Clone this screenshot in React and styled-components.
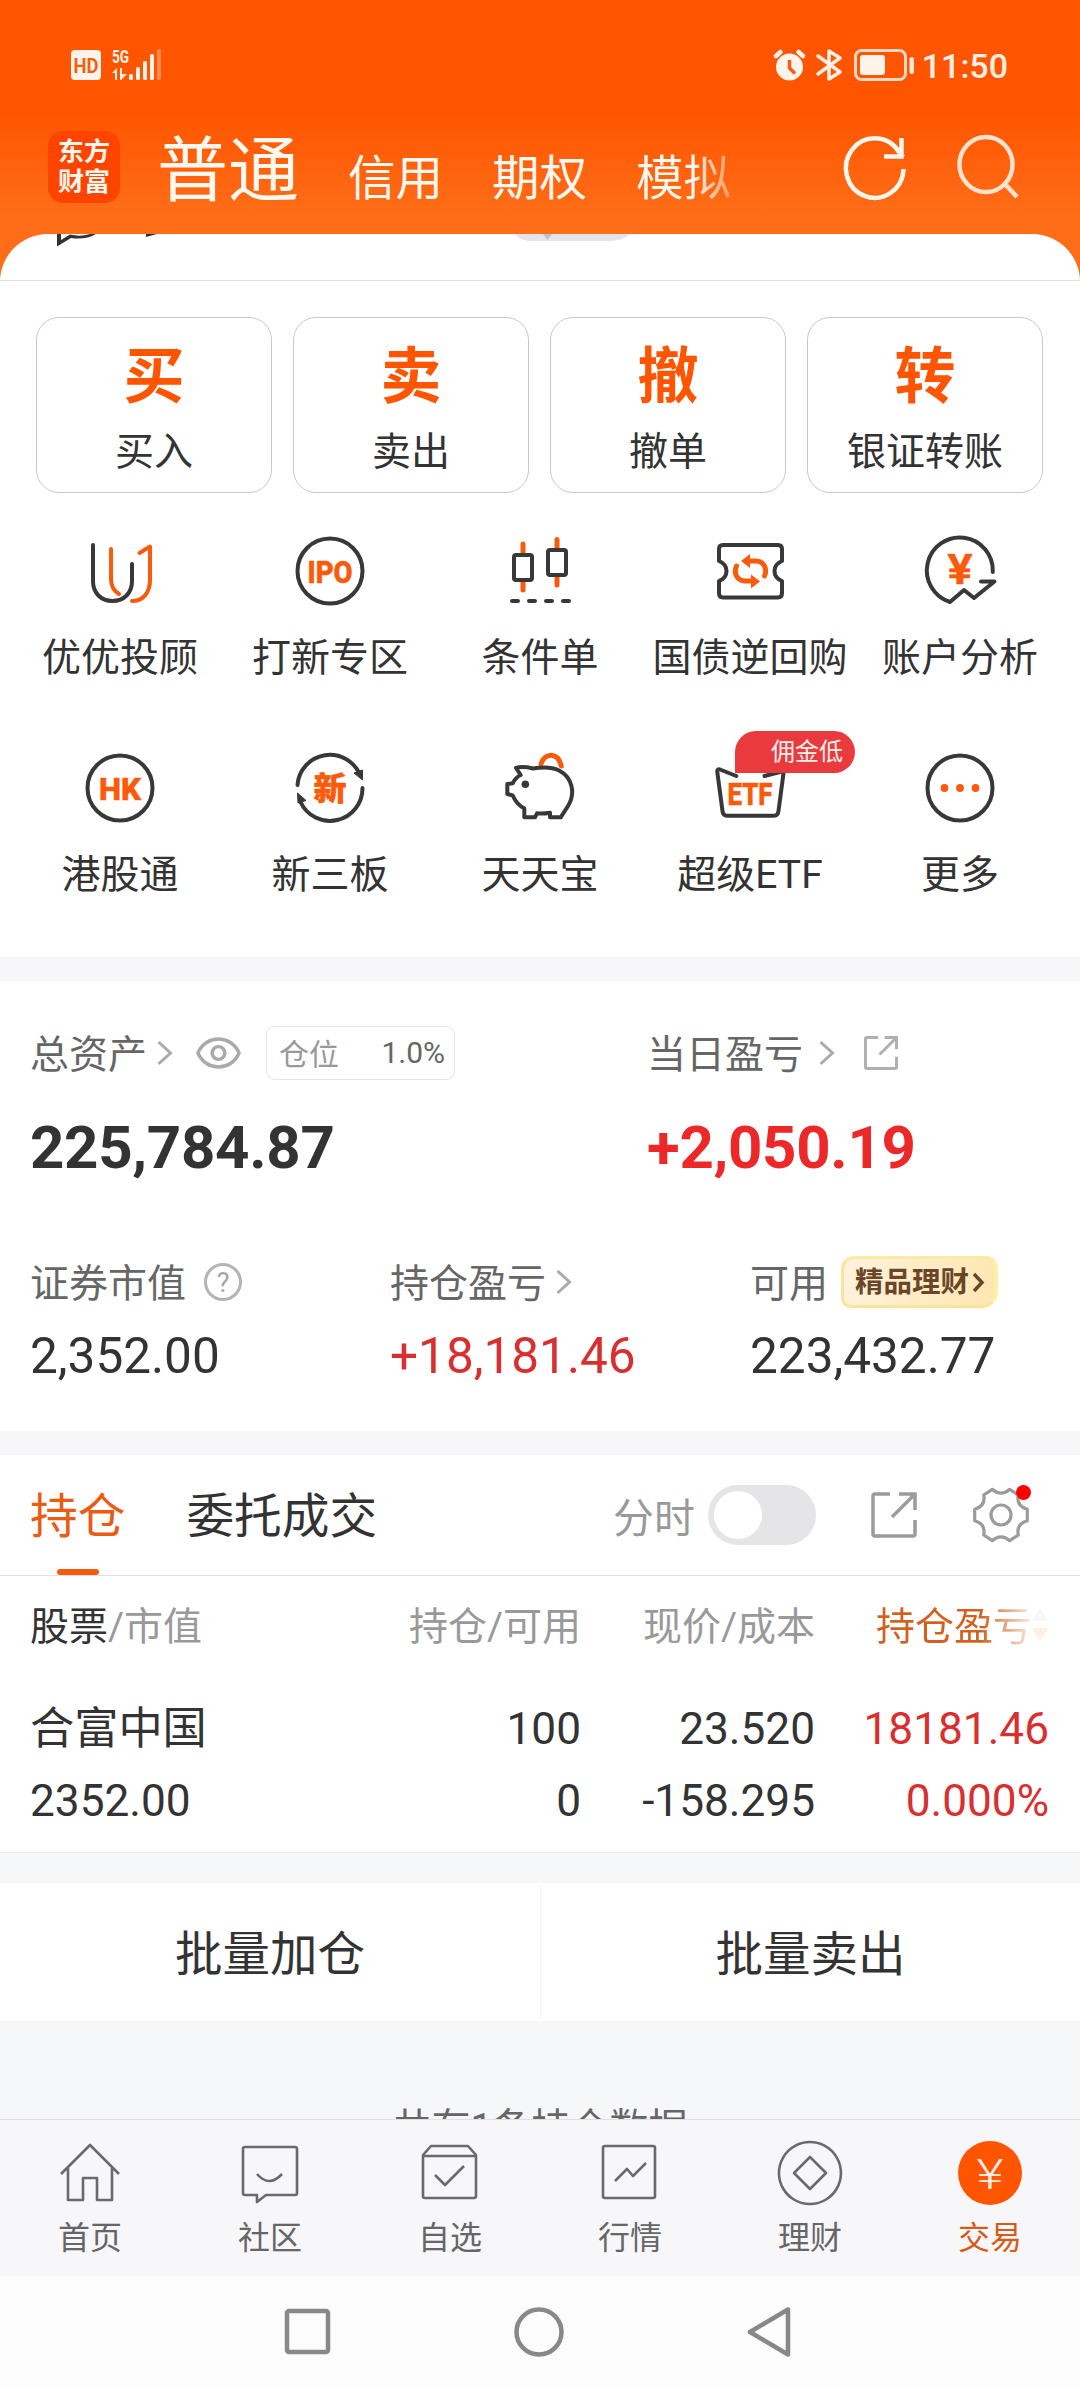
/**
*
* Trade home: header, quick actions, assets and positions
*
*/

import React from 'react';
import styled, { createGlobalStyle, ThemeProvider } from 'styled-components';

const theme = {
  color: {
    orange: '#ff5500',
    dark: '#333333',
    grey: '#666666',
    light: '#999999',
    red: '#d92f2f',
    gap: '#f7f7fa',
    line: '#e0e0e3',
  },
};

const GlobalStyle = createGlobalStyle`
  body {
    margin: 0;
    background: #fcfcfc;
    font-family: Roboto, 'Noto Sans CJK SC', sans-serif;
    color: #333333;
  }

  * {
    box-sizing: border-box;
  }

  svg {
    display: block;
    flex: none;
    overflow: visible;
  }
`;

/* ---------- icons ---------- */

const DARK = '#383838';
const ORANGE = '#fa5a0a';

const Line = (props) => (
  <g fill="none" stroke={props.color || DARK} strokeWidth={props.w || 4} strokeLinecap="round" strokeLinejoin="round">
    {props.children}
  </g>
);

const Word = (props) => (
  <text
    x={props.x || 38}
    y={props.y}
    fontSize={props.size}
    fontWeight={props.weight || 800}
    textAnchor="middle"
    textLength={props.length}
    lengthAdjust="spacingAndGlyphs"
    fill={ORANGE}
    stroke={ORANGE}
    strokeWidth="0.600"
    strokeLinejoin="round"
  >
    {props.children}
  </text>
);

const gridIcons = {
  advisor: (
    <>
      <Line>
        <path d="M11 12V48C11 60 19 68 30.500 68S50 60 50 48V31" />
      </Line>
      <Line color={ORANGE}>
        <path d="M29 16V46C29 53 32 58 37 61" />
        <path d="M57.500 20L68 13.500V47C68 60 61 68 50 68" />
      </Line>
    </>
  ),
  ipo: (
    <>
      <Line><circle cx="38" cy="38" r="32.500" /></Line>
      <Word y="49.500" size="32" length="45">IPO</Word>
    </>
  ),
  candles: (
    <>
      <Line color={ORANGE} w="5">
        <path d="M21 11V20M21 50V57M55 6.500V15M55 45V52" />
      </Line>
      <Line>
        <rect x="12" y="22" width="18" height="25" rx="2" />
        <rect x="46" y="17" width="18" height="25" rx="2" />
        <path d="M10 68H16M27 68H33M44 68H50M61 68H67" />
      </Line>
    </>
  ),
  bond: (
    <>
      <Line>
        <path d="M11 12H66Q70 12 70 16V28Q62.500 31 62.500 38T70 48V60Q70 64.500 66 64.500H11Q7 64.500 7 60V48Q14.500 45 14.500 38T7 28V16Q7 12 11 12Z" />
      </Line>
      <Line color={ORANGE} w="5">
        <path d="M24.500 33C21 41 26 48 33 48H40" />
        <path d="M52.500 43C56 35 51 28 44 28H37" />
      </Line>
      <path d="M29 28L38 21V35ZM48 48.500L39 41.500V55.500Z" fill={ORANGE} />
    </>
  ),
  analysis: (
    <>
      <Line>
        <path d="M70.800 39A33 33 0 1 0 28 69L42 57L52 65L72.500 48.500H59" />
      </Line>
      <Word y="51" size="43" length="25" weight="600">¥</Word>
    </>
  ),
  hk: (
    <>
      <Line><circle cx="38" cy="38" r="32.500" /></Line>
      <Word y="49.500" size="32" length="42">HK</Word>
    </>
  ),
  newBoard: (
    <>
      <Line>
        <path d="M5.500 35A32.500 32.500 0 0 1 68 25" />
        <path d="M70.500 38A32.500 32.500 0 0 1 8.500 52" />
      </Line>
      <path d="M70.500 30L62 23L70.500 20ZM5.500 43L14 50.500L6 53Z" fill={DARK} stroke={DARK} strokeWidth="1" />
      <Word y="49.500" size="32" length="33">新</Word>
    </>
  ),
  pig: (
    <>
      <Line color={ORANGE} w="5"><path d="M39 14C43 2 56 2 59.300 16" /></Line>
      <Line>
        <path d="M18.700 25L14 18Q20 16 31 18.500C40 17 50 17 57 20.500C70 27 74 43 66 56L58.700 67.300H48V62.700Q41 64 35 63.300L33 67.300H22.300V58.300Q15 55 10.700 45.500L5.300 44V34L10.700 33.300Q14 27 18.700 25Z" />
      </Line>
      <circle cx="23.300" cy="34.300" r="3.800" fill={DARK} />
    </>
  ),
  etf: (
    <>
      <Line>
        <path d="M24.300 26L8 19.500Q5 18.500 5.300 22L10.500 61Q11 65.700 15 65.700H62Q66 65.700 66.500 61L71.800 21L52.500 26" />
      </Line>
      <Word y="55" size="32" length="45">ETF</Word>
    </>
  ),
  more: (
    <>
      <Line><circle cx="38" cy="38" r="32.500" /></Line>
      <g fill={ORANGE}>
        <circle cx="22.500" cy="38" r="3.900" />
        <circle cx="38" cy="38" r="3.900" />
        <circle cx="53.500" cy="38" r="3.900" />
      </g>
    </>
  ),
};

const tabIcons = {
  home: <path d="M3 33L32 4L61 33M10 27V59H25V37H39V59H54V27" />,
  community: <path d="M7 6H57Q59 6 59 8V52Q59 54 57 54H28L19 61V54H7Q5 54 5 52V8Q5 6 7 6ZM19 33Q31 47 44 33" />,
  watchlist: <path d="M5 14L13 5H50L58 14V55Q58 57 56 57H7Q5 57 5 55ZM5 15H58M17 34L27 44L46 25" />,
  market: <path d="M7 5H55Q57 5 57 7V55Q57 57 55 57H7Q5 57 5 55V7Q5 5 7 5ZM17 40L29 28L35 35L48 22" />,
  wealth: <path d="M32 1A31 31 0 1 1 31.900 1ZM32 16L48 32L32 48L16 32Z" />,
};

const Chevron = (props) => (
  <svg width="15" height="24" viewBox="0 0 15 24" fill="none" stroke={props.color || '#aaaaaa'} strokeWidth={props.w || 3}>
    <path d="M1.500 1L13.500 12L1.500 23" />
  </svg>
);

const ExportIcon = (props) => (
  <svg width={props.size} height={props.size} viewBox="0 0 46 46" fill="none" stroke={props.color} strokeWidth={props.w}>
    <path d="M19 2H4Q2 2 2 4V42Q2 44 4 44H42Q44 44 44 42V28M28 2H44V18M44 2L21 25" />
  </svg>
);

/* ---------- data ---------- */

const actions = [
  { mark: '买', label: '买入' },
  { mark: '卖', label: '卖出' },
  { mark: '撤', label: '撤单' },
  { mark: '转', label: '银证转账' },
];

const services = [
  { icon: 'advisor', label: '优优投顾' },
  { icon: 'ipo', label: '打新专区' },
  { icon: 'candles', label: '条件单' },
  { icon: 'bond', label: '国债逆回购' },
  { icon: 'analysis', label: '账户分析' },
  { icon: 'hk', label: '港股通' },
  { icon: 'newBoard', label: '新三板' },
  { icon: 'pig', label: '天天宝' },
  { icon: 'etf', label: '超级ETF', badge: '佣金低' },
  { icon: 'more', label: '更多' },
];

const tabs = [
  { icon: 'home', label: '首页' },
  { icon: 'community', label: '社区' },
  { icon: 'watchlist', label: '自选' },
  { icon: 'market', label: '行情' },
  { icon: 'wealth', label: '理财' },
];

/* ---------- sections ---------- */

function StatusBar() {
  return (
    <Status>
      <svg width="90" height="32" viewBox="0 0 90 32">
        <rect x="0" y="1" width="30" height="30" rx="4" fill="#fff4ec" />
        <text x="15" y="23.500" fontSize="20" fontWeight="700" textAnchor="middle" textLength="25" lengthAdjust="spacingAndGlyphs" fill="#f0600f">HD</text>
        <text x="41" y="14" fontSize="19" fontWeight="700" textLength="17" lengthAdjust="spacingAndGlyphs" fill="#fff0e6">5G</text>
        <path d="M41 24L46 19V31H44V24ZM49 19H51V25H56L50 31H49Z" fill="#fff0e6" />
        <g fill="#fff0e6">
          <rect x="58" y="25" width="4" height="6" rx="1.500" />
          <rect x="65" y="18" width="4" height="13" rx="1.500" />
          <rect x="72" y="12" width="4" height="19" rx="1.500" />
          <rect x="79" y="5" width="4" height="26" rx="1.500" />
          <rect x="86" y="0" width="4" height="31" rx="1.500" opacity="0.35" />
        </g>
      </svg>
      <StatusRight>
        <svg width="142" height="32" viewBox="0 0 142 32">
          <circle cx="15.500" cy="18" r="13.500" fill="#fff4ec" />
          <path d="M15.500 11V19L21 24.500" fill="none" stroke="#f2600d" strokeWidth="3.500" />
          <path d="M2 7L6.500 3M29 7L24.500 3" stroke="#fff4ec" strokeWidth="4.500" strokeLinecap="round" />
          <path d="M44 7L66 23L55 30V2L66 9L44 25" fill="none" stroke="#fff0e6" strokeWidth="3.500" strokeLinejoin="round" strokeLinecap="round" />
          <rect x="81.500" y="1.500" width="50" height="29" rx="6" fill="none" stroke="#ffd9c2" strokeWidth="3" />
          <rect x="86" y="6" width="25" height="20" rx="3" fill="#fff4ec" />
          <rect x="135.500" y="8" width="4.500" height="17" rx="2" fill="#ffe6d6" />
        </svg>
        <Clock>11:50</Clock>
      </StatusRight>
    </Status>
  );
}

function Header() {
  return (
    <Head>
      <StatusBar />
      <NavRow>
        <Logo>东方<br />财富</Logo>
        <Accounts>
          <Account $active>普通</Account>
          <Account>信用</Account>
          <Account>期权</Account>
          <Account $fade>模拟</Account>
        </Accounts>
        <svg width="62" height="64" viewBox="0 0 62 64" fill="none" stroke="#fff6ee" strokeWidth="4.500">
          <path d="M59.500 34A28.800 29.800 0 1 1 55 17L59 22M57.500 3V21.500H40" />
        </svg>
        <svg width="62" height="64" viewBox="0 0 62 64" fill="none" stroke="#ffe3cf" strokeWidth="4.500">
          <ellipse cx="29" cy="29.500" rx="26.500" ry="27.500" />
          <path d="M47 48L60 62" />
        </svg>
      </NavRow>
    </Head>
  );
}

function Assets() {
  return (
    <AssetBox>
      <MainAssets>
        <div>
          <Caption>
            <Label>总资产</Label>
            <Push $left={10}><Chevron /></Push>
            <Push $left={24}>
              <svg width="45" height="32" viewBox="0 0 46 32" fill="none" stroke="#aaaaaa" strokeWidth="3.500">
                <path d="M2 16C10 -3 36 -3 44 16C36 35 10 35 2 16Z" />
                <circle cx="23" cy="16" r="6.500" />
              </svg>
            </Push>
            <Ratio><span>仓位</span><b>1.0%</b></Ratio>
          </Caption>
          <Total>225,784.87</Total>
        </div>
        <div>
          <Caption>
            <Label>当日盈亏</Label>
            <Push $left={16}><Chevron /></Push>
            <Push $left={30}><ExportIcon size="34" color="#b0b0b0" w="4" /></Push>
          </Caption>
          <Total $up>+2,050.19</Total>
        </div>
      </MainAssets>
      <SubAssets>
        <div>
          <Caption>
            <Label>证券市值</Label>
            <Push $left={18}><Help>?</Help></Push>
          </Caption>
          <Amount>2,352.00</Amount>
        </div>
        <div>
          <Caption>
            <Label>持仓盈亏</Label>
            <Push $left={10}><Chevron /></Push>
          </Caption>
          <Amount $up>+18,181.46</Amount>
        </div>
        <div>
          <Caption>
            <Label>可用</Label>
            <GoldTag>
              <Label>精品理财</Label>
              <svg width="12" height="21" viewBox="0 0 12 21" fill="none" stroke="#6b4528" strokeWidth="3.500"><path d="M2 2L10 10.500L2 19" /></svg>
            </GoldTag>
          </Caption>
          <Amount>223,432.77</Amount>
        </div>
      </SubAssets>
    </AssetBox>
  );
}

function Positions() {
  return (
    <PositionBox>
      <PositionTabs>
        <PositionTab $active>持仓</PositionTab>
        <PositionTab>委托成交</PositionTab>
        <Tools>
          <span>分时</span>
          <Toggle />
          <ExportIcon size="46" color="#9b9b9b" w="3.500" />
          <Settings>
            <svg width="60" height="60" viewBox="0 0 60 60" fill="none" stroke="#9b9b9b" strokeWidth="3.200" strokeLinejoin="round">
              <path d="M21.300 4.300Q30 12 38.700 4.300L47.300 10Q45 21 56.300 24.300V35.700Q45 39 47.300 50L38.700 55.700Q30 48 21.300 55.700L12.700 50Q15 39 3.700 35.700V24.300Q15 21 12.700 10Z" />
              <circle cx="30" cy="30" r="10" />
            </svg>
            <Dot />
          </Settings>
        </Tools>
      </PositionTabs>
      <TableHead>
        <span><em>股票</em>/市值</span>
        <span>持仓/可用</span>
        <span>现价/成本</span>
        <SortCell>
          持仓盈亏
          <svg width="16" height="34" viewBox="0 0 16 34">
            <path d="M8 0L16 13H0Z" fill="#f6f7f9" />
            <path d="M8 34L16 20H0Z" fill="#ffefe5" />
          </svg>
        </SortCell>
      </TableHead>
      <Stock>
        <Cell>合富中国</Cell>
        <Cell>100</Cell>
        <Cell>23.520</Cell>
        <Cell $up>18181.46</Cell>
        <Cell>2352.00</Cell>
        <Cell>0</Cell>
        <Cell>-158.295</Cell>
        <Cell $up>0.000%</Cell>
      </Stock>
    </PositionBox>
  );
}

function TabBar() {
  return (
    <Bar>
      {tabs.map((tab) => (
        <Tab key={tab.icon}>
          <svg width="64" height="64" viewBox="0 0 64 64" fill="none" stroke="#6a6a6a" strokeWidth="2.600" strokeLinejoin="round">
            {tabIcons[tab.icon]}
          </svg>
          <span>{tab.label}</span>
        </Tab>
      ))}
      <Tab $active>
        <svg width="64" height="64" viewBox="0 0 64 64">
          <circle cx="32" cy="32" r="32" fill="#ff5500" />
          <text x="32" y="48" fontSize="42" fontWeight="300" textAnchor="middle" textLength="27" lengthAdjust="spacingAndGlyphs" fill="#fff0e6">¥</text>
        </svg>
        <span>交易</span>
      </Tab>
    </Bar>
  );
}

function App() {
  return (
    <ThemeProvider theme={theme}>
      <GlobalStyle />
      <Screen>
        <Header />
        <CardTop>
          <svg width="1080" height="13" viewBox="0 0 1080 13">
            <path d="M57 0V12.500L71 4Q86 6 96 0H90Q80 3 70 0.500L61 6V0Z" fill="#333333" />
            <path d="M146 0H157L146 3Z" fill="#333333" />
            <path d="M515 0Q521 7 530 7H610Q622 7 630 0Z" fill="#e3e4ec" />
            <path d="M543 0H552L547.500 6Z" fill="#bfc1cf" />
          </svg>
        </CardTop>
        <Actions>
          {actions.map((item) => (
            <Action key={item.mark}>
              <strong>{item.mark}</strong>
              <span>{item.label}</span>
            </Action>
          ))}
        </Actions>
        <Services>
          {services.map((item) => (
            <Service key={item.icon}>
              <svg width="76" height="76" viewBox="0 0 76 76">{gridIcons[item.icon]}</svg>
              <span>{item.label}</span>
              {item.badge && <Badge>{item.badge}</Badge>}
            </Service>
          ))}
        </Services>
        <Gap />
        <Assets />
        <Gap />
        <Positions />
        <Batch>
          <button type="button">批量加仓</button>
          <button type="button">批量卖出</button>
        </Batch>
        <Summary>共有1条持仓数据</Summary>
        <TabBar />
        <SystemNav>
          <svg width="46" height="46" viewBox="0 0 46 46"><rect x="2" y="2" width="41" height="41" rx="2" /></svg>
          <svg width="50" height="50" viewBox="0 0 50 50"><circle cx="25" cy="25" r="22.500" /></svg>
          <svg width="46" height="50" viewBox="0 0 46 50"><path d="M41 2.500V47.500L3 25Z" /></svg>
        </SystemNav>
      </Screen>
    </ThemeProvider>
  );
}

/* ---------- styles ---------- */

const Screen = styled.div`
  width: 1080px;
  height: 2388px;
  display: flex;
  flex-direction: column;
  overflow: hidden;
  background: #ffffff;

  > * {
    flex: none;
  }
`;

const Head = styled.header`
  height: 234px;
  background: linear-gradient(#ff5500 0, #ff5500 112px, #ff6d18 215px, #ff6d18 234px);
`;

const Status = styled.div`
  height: 130px;
  padding: 0 72px 0 71px;
  display: flex;
  align-items: center;
  justify-content: space-between;
`;

const StatusRight = styled.div`
  display: flex;
  align-items: center;
`;

const Clock = styled.span`
  width: 92px;
  padding-top: 2px;
  font-size: 34px;
  line-height: 34px;
  font-weight: 500;
  text-align: right;
  white-space: nowrap;
  color: #fff0e6;
`;

const NavRow = styled.div`
  height: 74px;
  padding: 0 61px 0 48px;
  display: flex;
  align-items: center;

  svg + svg {
    margin-left: 51px;
  }
`;

const Logo = styled.div`
  width: 72px;
  height: 72px;
  padding-top: 4px;
  border-radius: 15px;
  background: #ff4400;
  font-family: 'Noto Sans CJK SC', sans-serif;
  font-size: 26px;
  line-height: 30px;
  font-weight: 700;
  text-align: center;
  color: #fff6ee;
`;

const Accounts = styled.div`
  flex: 1;
  padding: 15px 0 0 37px;
  display: flex;
  align-items: baseline;
`;

const Account = styled.span`
  font-size: ${(props) => (props.$active ? '71px' : '47.500px')};
  line-height: 74px;
  margin-right: 49px;
  color: #fff8f0;

  ${(props) => props.$fade && `
    color: transparent;
    background: linear-gradient(90deg, #fff8f0 60%, rgba(255, 248, 240, 0.35));
    background-clip: text;
    -webkit-background-clip: text;
  `}
`;

const CardTop = styled.div`
  height: 47px;
  background: #ffffff;
  border-radius: 48px 48px 0 0;
  border-bottom: 1px solid ${(props) => props.theme.color.line};

  /* orange showing behind the rounded corners */
  position: relative;
  z-index: 0;
  box-shadow: 0 -24px 0 -24px #ff6d18;

  &::before {
    content: '';
    position: absolute;
    inset: 0;
    z-index: -1;
    background:
      radial-gradient(circle at 48px 48px, transparent 47.500px, #ff6d18 48.500px) 0 0 / 48px 47px no-repeat,
      radial-gradient(circle at 0 48px, transparent 47.500px, #ff6d18 48.500px) 100% 0 / 48px 47px no-repeat;
  }
`;

const Actions = styled.div`
  padding: 36px 37px 0 36px;
  display: grid;
  grid-template-columns: repeat(4, 1fr);
  gap: 21px;
`;

const Action = styled.div`
  height: 176px;
  padding-top: 23px;
  border: 1px solid #c9c9c9;
  border-radius: 23px;
  display: flex;
  flex-direction: column;
  align-items: center;

  strong {
    font-size: 61px;
    line-height: 72px;
    font-weight: 700;
    color: ${(props) => props.theme.color.orange};
  }

  span {
    margin-top: 17px;
    font-size: 39px;
    line-height: 44px;
  }
`;

const Services = styled.div`
  height: 464px;
  padding: 40px 15px 0;
  display: grid;
  grid-template-columns: repeat(5, 210px);
  grid-auto-rows: 217px;
`;

const Service = styled.div`
  position: relative;
  display: flex;
  flex-direction: column;
  align-items: center;

  > span {
    margin-top: 27px;
    font-size: 39px;
    line-height: 44px;
    white-space: nowrap;
  }
`;

const Badge = styled.div`
  position: absolute;
  top: -19px;
  left: 90px;
  width: 120px;
  height: 42px;
  padding-right: 12px;
  border-radius: 21px 21px 21px 0;
  background: #e93b3d;
  font-size: 24px;
  line-height: 42px;
  text-align: right;
  color: #fff0f0;
`;

const Gap = styled.div`
  height: 24px;
  background: ${(props) => props.theme.color.gap};
`;

const AssetBox = styled.section`
  height: 450px;
  padding: 45px 0 0 30px;
`;

const MainAssets = styled.div`
  height: 229px;
  display: grid;
  grid-template-columns: 617px 1fr;
`;

const SubAssets = styled.div`
  display: grid;
  grid-template-columns: repeat(3, 360px);
`;

const Caption = styled.div`
  height: 54px;
  display: flex;
  align-items: center;
  font-size: 39px;
  white-space: nowrap;
  color: ${(props) => props.theme.color.grey};
`;

const Label = styled.span`
  margin-top: -5px;
`;

const Push = styled.div`
  margin-left: ${(props) => props.$left}px;
`;

const Ratio = styled.div`
  width: 189px;
  height: 54px;
  margin-left: 25px;
  padding: 0 9px 3px 12px;
  border: 1px solid #e4e4e6;
  border-radius: 9px;
  display: flex;
  align-items: center;
  justify-content: space-between;
  font-size: 30px;
  color: ${(props) => props.theme.color.light};

  b {
    padding-top: 2px;
    font-weight: 400;
    color: ${(props) => props.theme.color.grey};
  }
`;

const Total = styled.div`
  margin-top: 33px;
  font-size: 60px;
  line-height: 70px;
  font-weight: 700;
  letter-spacing: -0.3px;
  color: ${(props) => (props.$up ? '#ec2828' : props.theme.color.dark)};
`;

const Amount = styled.div`
  margin-top: 18px;
  font-size: 49.500px;
  line-height: 58px;
  color: ${(props) => (props.$up ? props.theme.color.red : props.theme.color.dark)};
`;

const Help = styled.div`
  width: 38px;
  height: 38px;
  border: 3px solid #b4b4b4;
  border-radius: 50%;
  font-size: 27px;
  line-height: 34px;
  text-align: center;
  color: #a5a5a5;
`;

const GoldTag = styled.div`
  width: 157px;
  height: 52px;
  margin-left: 13px;
  padding-left: 11px;
  border: 3px solid #fae49a;
  border-top-color: #fbeaa0;
  border-right-color: #fdf3a0;
  border-radius: 13px 12px 16px 10px;
  background: linear-gradient(100deg, #fdf3dc, #fee6b0);
  display: flex;
  align-items: center;
  gap: 3px;
  font-size: 28.500px;
  font-weight: 700;
  color: #6b4528;
`;

const PositionBox = styled.section`
  height: 398px;
  border-bottom: 1px solid #eaecef;
`;

const PositionTabs = styled.div`
  height: 121px;
  padding: 0 49px 0 30px;
  display: flex;
  border-bottom: 1px solid ${(props) => props.theme.color.line};
`;

const PositionTab = styled.div`
  position: relative;
  margin-right: 61px;
  padding-top: 5px;
  font-size: 47.700px;
  line-height: 115px;
  color: ${(props) => (props.$active ? '#ea5b13' : props.theme.color.dark)};

  ${(props) => props.$active && `
    &::after {
      content: '';
      position: absolute;
      left: 27px;
      bottom: 0;
      width: 42px;
      height: 6px;
      border-radius: 3px;
      background: #f55a0e;
    }
  `}
`;

const Tools = styled.div`
  flex: 1;
  display: flex;
  align-items: center;
  justify-content: flex-end;
  font-size: 41px;
  color: ${(props) => props.theme.color.light};
`;

const Toggle = styled.div`
  width: 108px;
  height: 60px;
  margin: 0 55px 0 13px;
  padding: 6px;
  border-radius: 30px;
  background: #e5e5e7;

  &::before {
    content: '';
    display: block;
    width: 48px;
    height: 48px;
    border-radius: 50%;
    background: #ffffff;
  }
`;

const Settings = styled.div`
  position: relative;
  margin-left: 54px;
`;

const Dot = styled.div`
  position: absolute;
  top: 0;
  right: 0;
  width: 15px;
  height: 15px;
  border-radius: 50%;
  background: #ff0000;
`;

const TableHead = styled.div`
  height: 100px;
  padding: 0 31px 7px 30px;
  display: grid;
  grid-template-columns: 290px 261px 234px 234px;
  align-items: center;
  font-size: 39px;
  white-space: nowrap;
  color: ${(props) => props.theme.color.light};

  em {
    font-style: normal;
    color: ${(props) => props.theme.color.dark};
  }

  > span:not(:first-child) {
    text-align: right;
  }
`;

const SortCell = styled.div`
  padding-left: 61px;
  display: flex;
  align-items: center;
  color: transparent;
  background: linear-gradient(90deg, #d2601f 165px, rgba(210, 96, 31, 0.12) 217px);
  background-clip: text;
  -webkit-background-clip: text;

  svg {
    margin-top: 4px;
  }
`;

const Stock = styled.div`
  padding: 17px 31px 0 30px;
  display: grid;
  grid-template-columns: 290px 261px 234px 234px;
  grid-auto-rows: 72px;
`;

const Cell = styled.span`
  font-size: 44.200px;
  line-height: 72px;
  text-align: right;
  color: ${(props) => (props.$up ? props.theme.color.red : props.theme.color.dark)};

  &:nth-child(4n + 1) {
    text-align: left;
  }
`;

const Batch = styled.div`
  padding-top: 30px;
  height: 168px;
  display: grid;
  grid-template-columns: 1fr 1fr;
  background: #f6f7f9;

  button {
    border: 0;
    padding: 0 0 3px;
    background: #ffffff;
    font: inherit;
    font-size: 47.500px;
    color: ${(props) => props.theme.color.dark};
  }

  button + button {
    border-left: 1px solid #f6f6f8;
  }
`;

const Summary = styled.div`
  height: 98px;
  padding-top: 85px;
  overflow: hidden;
  background: #f6f7f9;
  font-size: 39px;
  line-height: 44px;
  text-align: center;
  color: ${(props) => props.theme.color.grey};
`;

const Bar = styled.nav`
  height: 157px;
  border-top: 1px solid #dfe0e3;
  background: ${(props) => props.theme.color.gap};
  display: grid;
  grid-template-columns: repeat(6, 1fr);
`;

const Tab = styled.div`
  padding-top: 21px;
  display: flex;
  flex-direction: column;
  align-items: center;
  color: ${(props) => (props.$active ? '#d55c17' : props.theme.color.grey)};

  span {
    margin-top: 15px;
    font-size: 32px;
    line-height: 36px;
  }
`;

const SystemNav = styled.div`
  height: 112px;
  padding-right: 2px;
  background: #fcfcfc;
  display: flex;
  align-items: center;
  justify-content: center;
  gap: 183px;

  svg {
    fill: none;
    stroke: #888888;
    stroke-width: 4.500;
    stroke-linejoin: round;
  }
`;

export default App;
